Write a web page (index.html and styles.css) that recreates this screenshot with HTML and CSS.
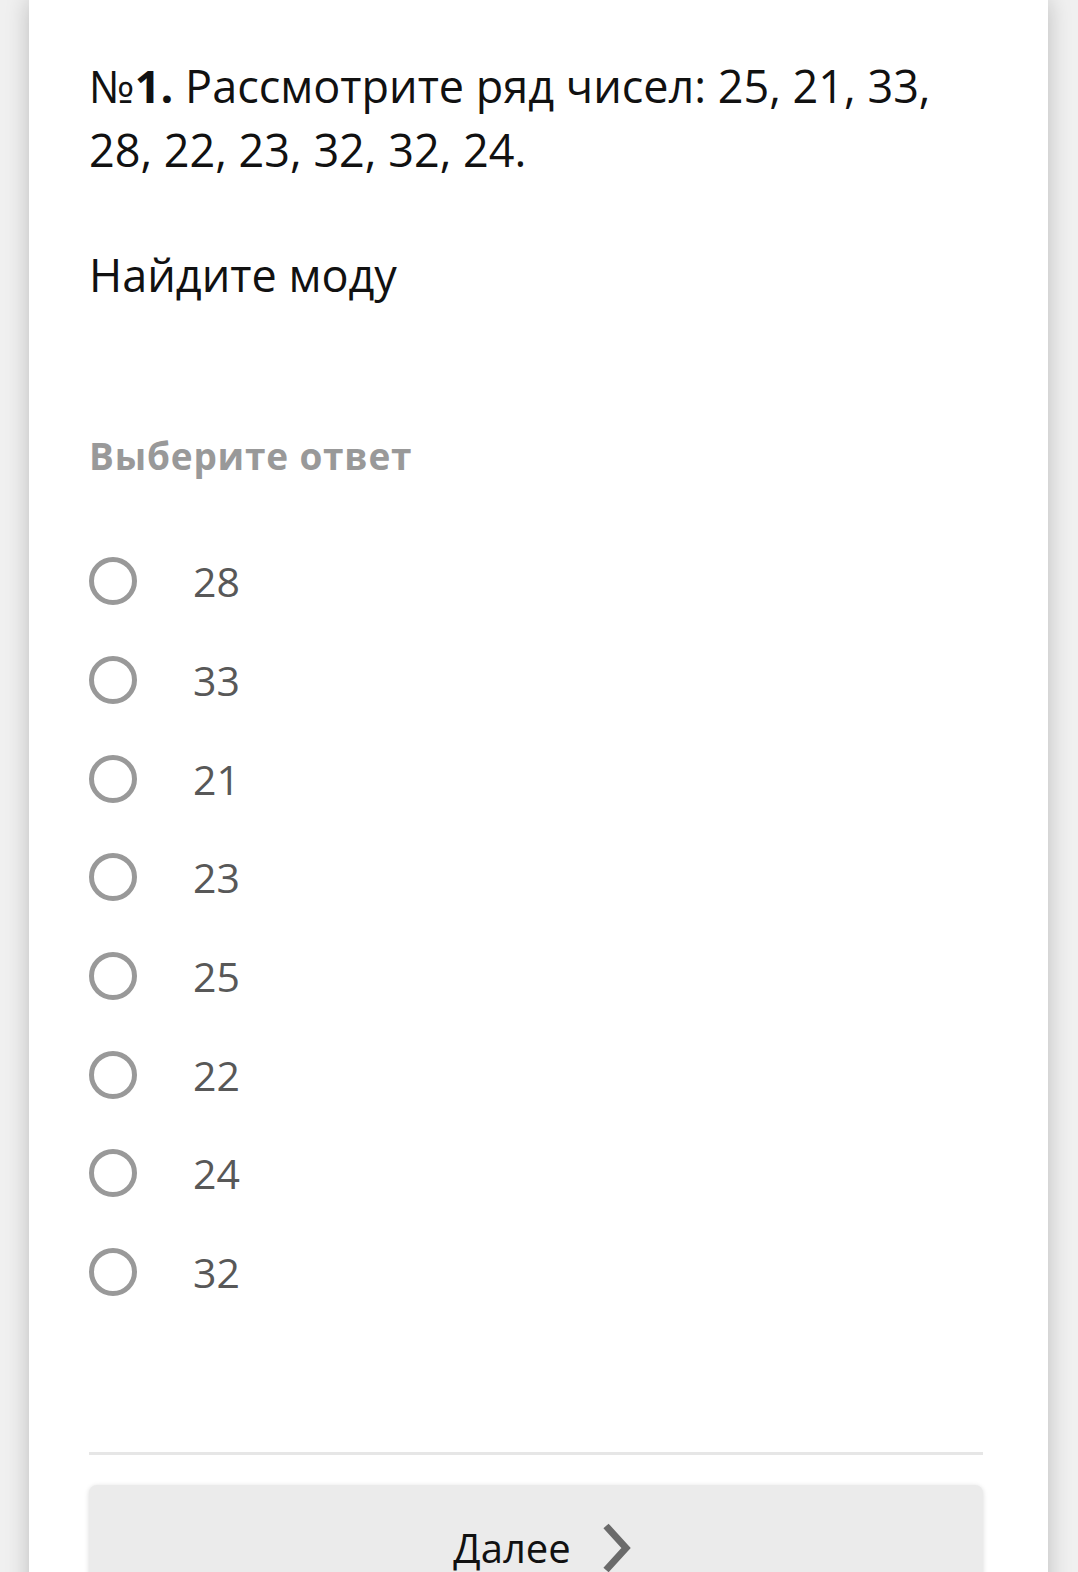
FILE: index.html
```html
<!DOCTYPE html>
<html lang="ru">

<head>
    <meta charset="UTF-8" />
    <meta name="viewport" content="width=device-width, initial-scale=1.0" />
    <title>Тест - Мода ряда чисел</title>
    <link rel="stylesheet" href="styles.css">
</head>

<body>
    <div class="page">
        <div class="card">
            <p class="question">№<b>1.</b> Рассмотрите ряд чисел: 25, 21, 33, 28, 22, 23, 32, 32, 24.</p>
            <p class="task">Найдите моду</p>

            <div class="hint">Выберите ответ</div>

            <div class="options">
                <label class="option"><span class="radio"></span><span class="value">28</span></label>
                <label class="option"><span class="radio"></span><span class="value">33</span></label>
                <label class="option"><span class="radio"></span><span class="value">21</span></label>
                <label class="option"><span class="radio"></span><span class="value">23</span></label>
                <label class="option"><span class="radio"></span><span class="value">25</span></label>
                <label class="option"><span class="radio"></span><span class="value">22</span></label>
                <label class="option"><span class="radio"></span><span class="value">24</span></label>
                <label class="option"><span class="radio"></span><span class="value">32</span></label>
            </div>

            <div class="divider"></div>

            <button class="next-btn">
                <span>Далее</span>
                <svg class="chevron" width="30" height="52" viewBox="0 0 30 52">
                    <polyline points="5,4 25,26 5,48" fill="none" stroke="#6a6a6a" stroke-width="7" />
                </svg>
            </button>
        </div>
    </div>
</body>

</html>
```

FILE: styles.css
```css
body {
    font-family: "Open Sans", "Noto Sans", sans-serif;
    background-color: #f0f0f0;
    margin: 0;
    padding: 0;
    overflow: hidden;
}

.page {
    padding: 0 30px 0 29px;
}

.card {
    background: #ffffff;
    padding: 54px 65px 40px 60px;
    box-shadow: 0 0 22px rgba(0, 0, 0, 0.22);
    min-height: 1600px;
}

.question,
.task {
    margin: 0;
    font-size: 45px;
    line-height: 64px;
    color: #111;
}

.question b {
    font-weight: 700;
}

.task {
    margin-top: 61px;
}

.hint {
    margin-top: 125px;
    font-size: 37px;
    line-height: 48px;
    letter-spacing: 0.8px;
    font-weight: 700;
    color: #999;
}

.options {
    margin-top: 52px;
}

.option {
    display: flex;
    align-items: center;
    height: 98.7px;
    cursor: pointer;
}

.radio {
    box-sizing: border-box;
    width: 48px;
    height: 48px;
    border: 5px solid #999;
    border-radius: 50%;
    flex-shrink: 0;
}

.value {
    margin-left: 56px;
    font-size: 41px;
    color: #585858;
}

.divider {
    margin-top: 130px;
    height: 3px;
    background: #e6e6e6;
}

.next-btn {
    display: flex;
    align-items: center;
    justify-content: center;
    gap: 30px;
    width: 100%;
    margin-top: 30px;
    padding: 36px 0 40px 12px;
    border: none;
    border-radius: 8px;
    background: #ebebeb;
    box-shadow: 0 1px 5px rgba(0, 0, 0, 0.15);
    font-family: inherit;
    font-size: 40px;
    line-height: 54px;
    color: #111;
}

.chevron {
    display: block;
}
```
